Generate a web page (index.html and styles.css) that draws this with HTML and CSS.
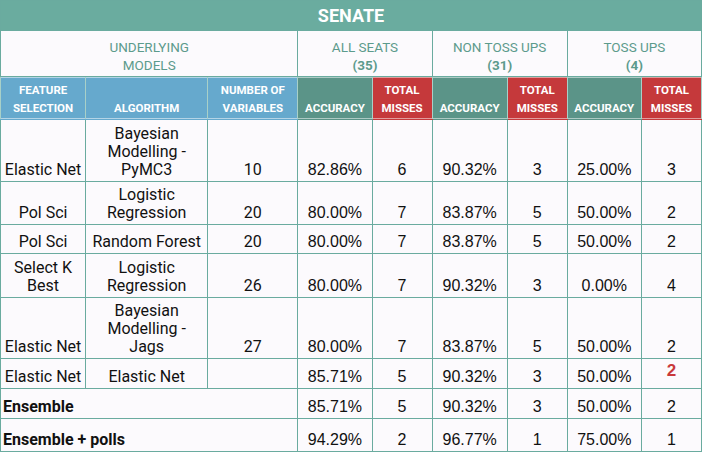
FILE: index.html
```html
<!DOCTYPE html>
<html>
<head>
<meta charset="utf-8">
<link rel="stylesheet" href="styles.css">
</head>
<body>
<table class="senate">
  <colgroup>
    <col class="c-fs"><col class="c-alg"><col class="c-num">
    <col class="c-acc"><col class="c-mis">
    <col class="c-acc2"><col class="c-mis">
    <col class="c-acc"><col class="c-mis">
  </colgroup>
  <tr class="title"><td colspan="9">SENATE</td></tr>
  <tr class="group">
    <td colspan="3">UNDERLYING<br>MODELS</td>
    <td colspan="2">ALL SEATS<br><b>(35)</b></td>
    <td colspan="2">NON TOSS UPS<br><b>(31)</b></td>
    <td colspan="2">TOSS UPS<br><b>(4)</b></td>
  </tr>
  <tr class="head">
    <td class="blue">FEATURE<br>SELECTION</td>
    <td class="blue">ALGORITHM</td>
    <td class="blue">NUMBER OF<br>VARIABLES</td>
    <td class="teal">ACCURACY</td>
    <td class="red">TOTAL<br>MISSES</td>
    <td class="teal">ACCURACY</td>
    <td class="red">TOTAL<br>MISSES</td>
    <td class="teal">ACCURACY</td>
    <td class="red">TOTAL<br>MISSES</td>
  </tr>
  <tr class="r62">
    <td class="txt">Elastic Net</td><td class="txt">Bayesian<br>Modelling -<br>PyMC3</td><td class="txt">10</td>
    <td>82.86%</td><td>6</td><td>90.32%</td><td>3</td><td>25.00%</td><td>3</td>
  </tr>
  <tr class="r43">
    <td class="txt">Pol Sci</td><td class="txt">Logistic<br>Regression</td><td class="txt">20</td>
    <td>80.00%</td><td>7</td><td>83.87%</td><td>5</td><td>50.00%</td><td>2</td>
  </tr>
  <tr class="r29">
    <td class="txt">Pol Sci</td><td class="txt">Random Forest</td><td class="txt">20</td>
    <td>80.00%</td><td>7</td><td>83.87%</td><td>5</td><td>50.00%</td><td>2</td>
  </tr>
  <tr class="r44">
    <td class="txt">Select K<br>Best</td><td class="txt">Logistic<br>Regression</td><td class="txt">26</td>
    <td>80.00%</td><td>7</td><td>90.32%</td><td>3</td><td>0.00%</td><td>4</td>
  </tr>
  <tr class="r61">
    <td class="txt">Elastic Net</td><td class="txt">Bayesian<br>Modelling -<br>Jags</td><td class="txt">27</td>
    <td>80.00%</td><td>7</td><td>83.87%</td><td>5</td><td>50.00%</td><td>2</td>
  </tr>
  <tr class="r29">
    <td class="txt">Elastic Net</td><td class="txt">Elastic Net</td><td class="txt"></td>
    <td>85.71%</td><td>5</td><td>90.32%</td><td>3</td><td>50.00%</td><td class="hot">2</td>
  </tr>
  <tr class="r30">
    <td class="txt total" colspan="3">Ensemble</td>
    <td>85.71%</td><td>5</td><td>90.32%</td><td>3</td><td>50.00%</td><td>2</td>
  </tr>
  <tr class="r33">
    <td class="txt total" colspan="3">Ensemble + polls</td>
    <td>94.29%</td><td>2</td><td>96.77%</td><td>1</td><td>75.00%</td><td>1</td>
  </tr>
</table>
</body>
</html>
```
FILE: styles.css
```css
html, body {
  margin: 0;
  padding: 0;
  background: #ffffff;
}

.senate {
  border-collapse: collapse;
  table-layout: fixed;
  width: 702px;
  background: #fcfafd;
  font-family: "Liberation Sans", Arial, sans-serif;
  font-size: 16px;
  line-height: 18px;
  color: #111111;
}

.c-fs { width: 85px; }
.c-alg { width: 122px; }
.c-num { width: 90px; }
.c-acc { width: 74px; }
.c-acc2 { width: 75px; }
.c-mis { width: 60px; }

.senate td {
  border: 1px solid #6aab9f;
  padding: 0 1px 2px;
  text-align: center;
  vertical-align: bottom;
  overflow: visible;
  white-space: nowrap;
}

.title td {
  height: 29px;
  padding: 0;
  background: #6aac9f;
  color: #ffffff;
  font-family: Roboto, "Noto Sans", sans-serif;
  font-weight: 700;
  font-size: 18px;
  vertical-align: middle;
}

.group td {
  height: 43px;
  color: #5c9b8c;
  font-family: Roboto, "Noto Sans", sans-serif;
  font-size: 13.5px;
  background: #fcfafd;
}

.group b {
  font-weight: 700;
}

.head td {
  height: 40px;
  color: #ffffff;
  font-family: Roboto, "Noto Sans", sans-serif;
  font-weight: 700;
  font-size: 11.5px;
  padding-bottom: 2px;
  border-color: #a8d0c8;
}

.head .blue {
  background: linear-gradient(to bottom, #66a9cd calc(100% - 1px), #ffffff calc(100% - 1px));
  border-bottom-color: #66a9cd;
}

.head .teal {
  background: linear-gradient(to bottom, #5b9488 calc(100% - 1px), #ffffff calc(100% - 1px));
  border-bottom-color: #5b9488;
}

.head .red {
  background: linear-gradient(to bottom, #c5393b calc(100% - 1px), #ffffff calc(100% - 1px));
  border-bottom-color: #c5393b;
}

.senate .txt {
  font-family: Roboto, "Noto Sans", sans-serif;
  font-size: 16px;
  color: #111111;
}

.senate .total {
  font-weight: 700;
  text-align: left;
  padding-left: 2px;
}

.senate .hot {
  color: #c9393b;
  font-weight: 700;
  font-size: 17px;
  vertical-align: top;
  padding-top: 3px;
  padding-bottom: 0;
}

.r62 td { height: 59px; }
.r43 td { height: 40px; }
.r29 td { height: 26px; }
.r44 td { height: 41px; }
.r61 td { height: 58px; }
.r30 td { height: 27px; }
.r33 td { height: 30px; }
```
